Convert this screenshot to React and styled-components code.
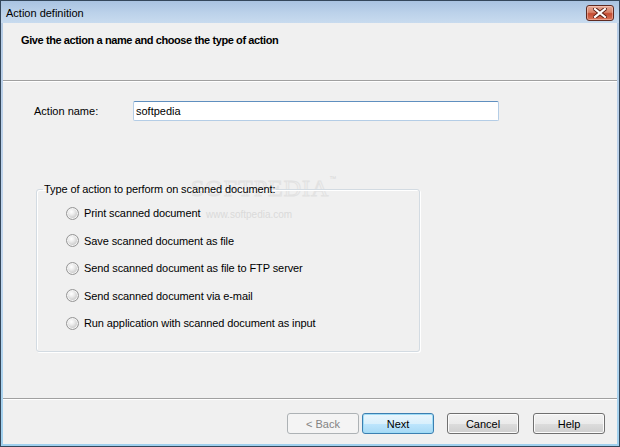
import React from "react";
import styled, { createGlobalStyle, css } from "styled-components";

const GlobalStyle = createGlobalStyle`
    html, body {
        margin: 0;
        padding: 0;
        background: #ffffff;
    }
    body {
        font-family: "Liberation Sans", Arial, sans-serif;
        font-size: 11px;
        color: #000000;
    }
`;

const actions = [
    "Print scanned document",
    "Save scanned document as file",
    "Send scanned document as file to FTP server",
    "Send scanned document via e-mail",
    "Run application with scanned document as input"
];

const CloseGlyph = () => (
    <svg width="14" height="10" viewBox="0 0 14 10">
        <path
            d="M2 1 L12 9 M12 1 L2 9"
            stroke="#5a1d12"
            strokeWidth="4"
            strokeLinecap="square"
        />
        <path
            d="M2 1 L12 9 M12 1 L2 9"
            stroke="#ffffff"
            strokeWidth="2.2"
            strokeLinecap="square"
        />
    </svg>
);

const App = () => (
    <>
        <GlobalStyle />
        <Window>
            <TitleBar>
                <Title>Action definition</Title>
                <CloseButton>
                    <CloseGlyph />
                </CloseButton>
            </TitleBar>
            <Client>
                <Header>Give the action a name and choose the type of action</Header>
                <Body>
                    <Watermark>
                        SOFTPEDIA<sup>™</sup>
                    </Watermark>
                    <WatermarkUrl>www.softpedia.com</WatermarkUrl>
                    <NameRow>
                        <Label>Action name:</Label>
                        <TextBox defaultValue="softpedia" />
                    </NameRow>
                    <GroupBox>
                        <Legend>Type of action to perform on scanned document:</Legend>
                        <OptionList>
                            {actions.map((a) => (
                                <Option key={a}>
                                    <Radio />
                                    <span>{a}</span>
                                </Option>
                            ))}
                        </OptionList>
                    </GroupBox>
                </Body>
                <Footer>
                    <Button disabled>&lt; Back</Button>
                    <Button primary gap={3}>
                        Next
                    </Button>
                    <Button gap={13}>Cancel</Button>
                    <Button gap={14}>Help</Button>
                </Footer>
            </Client>
        </Window>
    </>
);

export default App;

const Window = styled.div`
    position: relative;
    box-sizing: border-box;
    width: 620px;
    height: 447px;
    border: 1px solid #34475b;
    background: linear-gradient(to bottom, #b4cbe5 0%, #c3d7ee 60%, #9fd0ee 100%);
    display: flex;
    flex-direction: column;
    overflow: hidden;
`;

const TitleBar = styled.div`
    height: 22px;
    flex: none;
    display: flex;
    align-items: center;
    justify-content: space-between;
    padding: 0 4px 0 5px;
    background: linear-gradient(to bottom, #a9c3e1 0%, #bcd2ea 55%, #c8dbef 100%);
`;

const Title = styled.span`
    font-size: 11px;
    color: #000000;
    margin-top: 1px;
`;

const CloseButton = styled.div`
    box-sizing: border-box;
    width: 28px;
    height: 16px;
    margin-top: 2px;
    margin-right: 1px;
    border: 1px solid #5e2a21;
    border-radius: 3px;
    background: linear-gradient(to bottom, #e6a996 0%, #d88269 45%, #c44b31 55%, #d9755a 100%);
    box-shadow: inset 0 0 0 1px rgba(255, 220, 210, 0.45);
    display: flex;
    align-items: center;
    justify-content: center;
`;

const Client = styled.div`
    flex: 1;
    margin: 0 2px 2px;
    background: #f0f0f0;
    display: flex;
    flex-direction: column;
`;

const Header = styled.div`
    flex: none;
    height: 58px;
    box-sizing: border-box;
    padding: 11px 0 0 18px;
    font-weight: bold;
    font-size: 11px;
    line-height: 13px;
    letter-spacing: -0.4px;
    border-bottom: 1px solid #a0a0a0;
    box-shadow: 0 1px 0 #ffffff;
`;

const Body = styled.div`
    flex: 1;
    padding: 20px 0 0 31px;
`;

const NameRow = styled.div`
    display: flex;
    align-items: center;
`;

const Label = styled.span`
    width: 99px;
    flex: none;
`;

const TextBox = styled.input`
    box-sizing: border-box;
    width: 366px;
    height: 20px;
    margin: 0;
    padding: 0 2px;
    font-family: "Liberation Sans", Arial, sans-serif;
    font-size: 11px;
    color: #000000;
    background: #ffffff;
    border: 1px solid #b4cde6;
    border-top-color: #5f8fbf;
    border-radius: 2px;
    outline: none;
`;

const GroupBox = styled.fieldset`
    position: relative;
    box-sizing: border-box;
    width: 384px;
    margin: 62px 0 0 2px;
    padding: 0 0 21px;
    border: 1px solid #d3dbe2;
    border-radius: 3px;
    box-shadow: 1px 1px 0 #ffffff, inset 1px 1px 0 #ffffff;
`;

const Legend = styled.legend`
    margin-left: 6px;
    padding: 0 1px;
    line-height: 13px;
    letter-spacing: -0.1px;
`;

const OptionList = styled.div`
    display: flex;
    flex-direction: column;
    gap: 13.5px;
    padding: 10px 0 0 29px;
`;

const Option = styled.label`
    display: flex;
    align-items: center;
    height: 14px;
    gap: 5px;
    letter-spacing: -0.1px;
`;

const Radio = styled.span`
    box-sizing: border-box;
    width: 13px;
    height: 13px;
    border-radius: 50%;
    border: 1px solid #969696;
    background: radial-gradient(circle at 40% 35%, #ffffff 0%, #ececec 30%, #c8c8c8 70%, #b0b0b0 100%);
    box-shadow: inset 0 0 0 1px #f4f4f4;
`;

const Watermark = styled.div`
    position: absolute;
    left: 190px;
    top: 174px;
    font-family: "Liberation Serif", serif;
    font-size: 24px;
    letter-spacing: 1px;
    color: transparent;
    -webkit-text-stroke: 1px #e2e2e2;
    pointer-events: none;

    sup {
        font-family: "Liberation Sans", sans-serif;
        font-size: 7px;
        -webkit-text-stroke: 0;
        color: #d8d8d8;
        vertical-align: top;
    }
`;

const WatermarkUrl = styled.div`
    position: absolute;
    left: 205px;
    top: 208px;
    font-size: 10px;
    color: #dadada;
    pointer-events: none;
`;

const Footer = styled.div`
    flex: none;
    height: 46px;
    box-sizing: border-box;
    border-top: 1px solid #a0a0a0;
    box-shadow: inset 0 1px 0 #ffffff;
    display: flex;
    justify-content: flex-end;
    align-items: flex-start;
    padding: 14px 12px 0 0;
`;

const Button = styled.button`
    box-sizing: border-box;
    width: 72px;
    height: 21px;
    margin: 0 0 0 ${(p) => p.gap || 0}px;
    padding: 0;
    font-family: "Liberation Sans", Arial, sans-serif;
    font-size: 11px;
    color: #000000;
    border: 1px solid #707070;
    border-radius: 3px;
    background: linear-gradient(to bottom, #f2f2f2 0%, #ebebeb 50%, #dddddd 51%, #cfcfcf 100%);
    box-shadow: inset 0 0 0 1px #fbfbfb;

    ${(p) =>
        p.primary &&
        css`
            border-color: #3c7fb1;
            background: linear-gradient(to bottom, #eaf6fd 0%, #d9f0fc 50%, #bee6fd 51%, #a7d9f5 100%);
            box-shadow: inset 0 0 0 1px #9fdcf6;
        `}

    &:disabled {
        color: #838383;
        border-color: #adb2b5;
        background: #f4f4f4;
        box-shadow: none;
    }
`;
